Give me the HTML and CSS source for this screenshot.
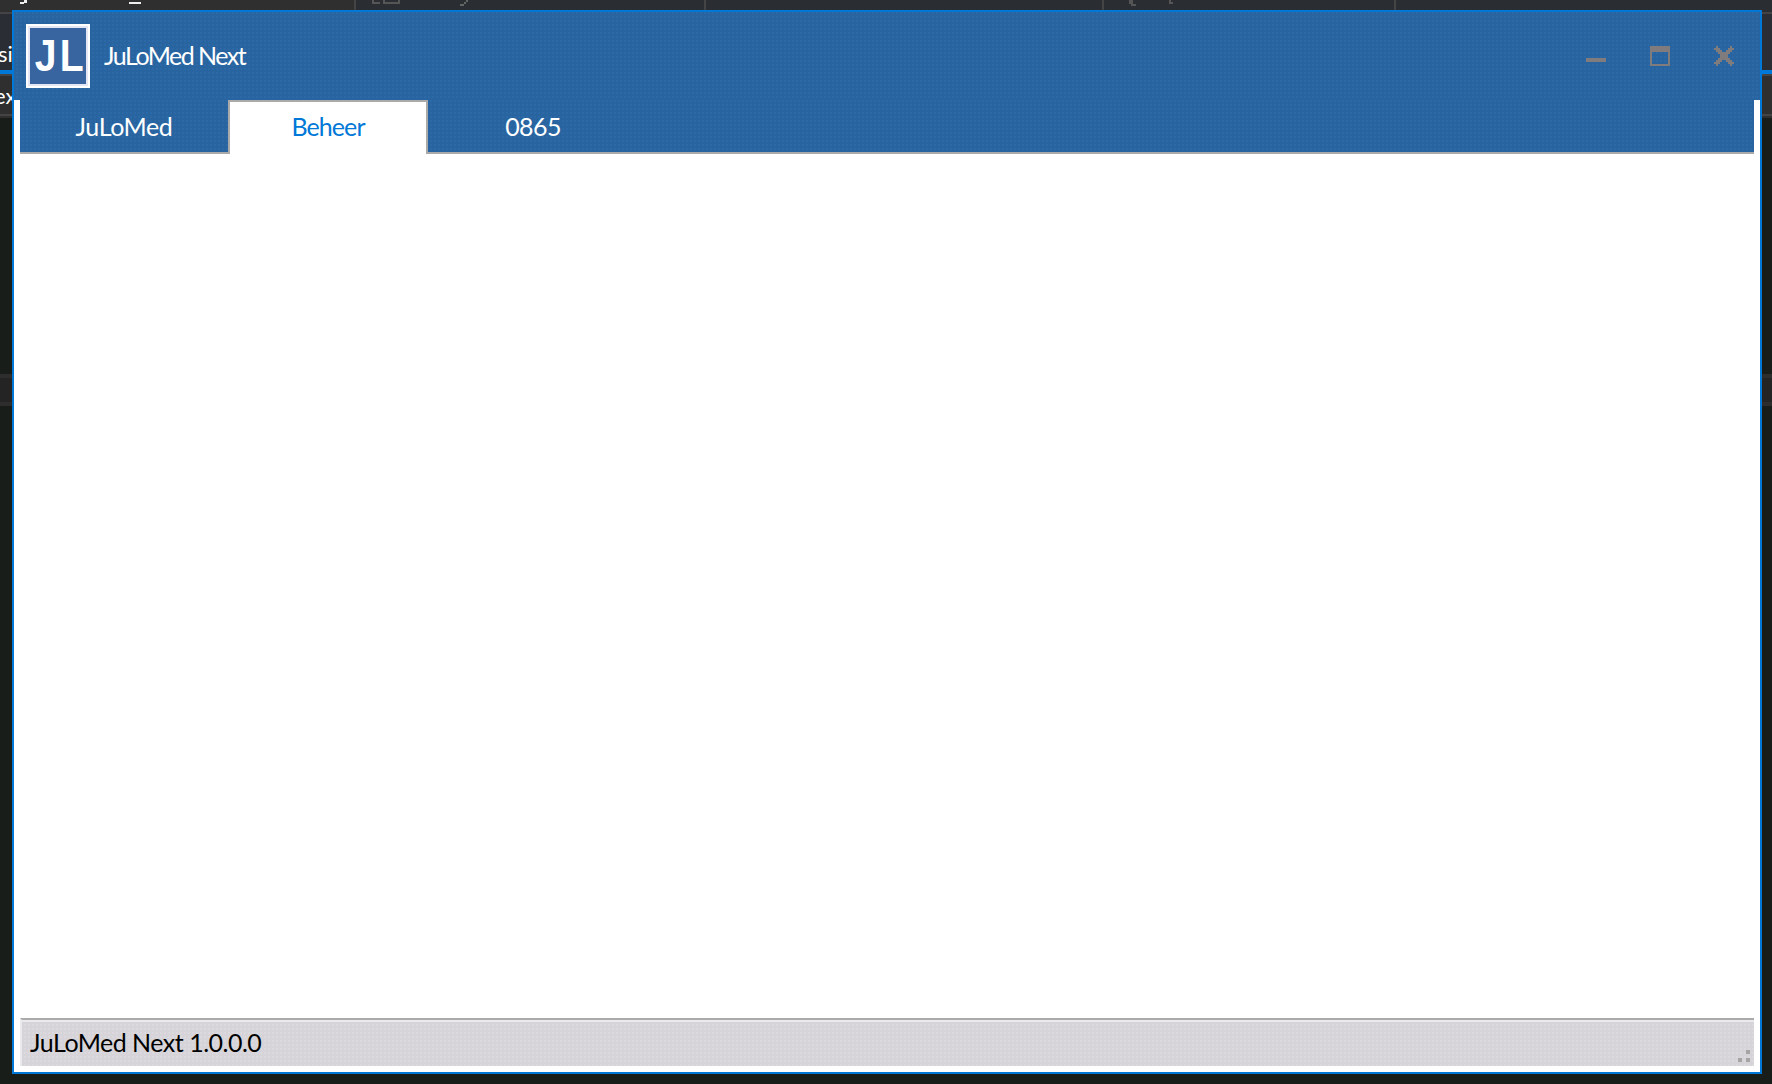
FILE: index.html
```html
<!DOCTYPE html>
<html lang="nl">
<head>
    <meta charset="UTF-8">
    <meta name="viewport" content="width=device-width, initial-scale=1.0">
    <title>JuLoMed Next</title>
    <link rel="stylesheet" href="styles.css">
</head>
<body>
    <div class="desktop">
        <div class="panels">
            <div class="panel first"></div>
            <div class="panel second"></div>
            <div class="panel third"></div>
            <div class="panel fourth"></div>
            <div class="panel last"></div>
        </div>
        <div class="strip">si</div>
        <div class="accent"></div>
        <div class="toolbar">ex</div>
        <div class="divider"></div>
        <!-- clipped remains of the labels behind the window -->
        <svg class="scraps" width="1200" height="10" viewBox="0 0 1200 10">
            <path d="M20 2h4v2h-4zM24 0h3v3h-3zM129 2h12v2h-12z" fill="#eeeeee"/>
            <path d="M373 0v3h7M384 0v3h15V0" fill="none" stroke="#555555" stroke-width="2"/>
            <path d="M460 4h4v2h-4zM464 2h2v2h-2zM466 0h2v2h-2z" fill="#656565"/>
            <path d="M1129 0h4v4h-4zM1131 4h5v2h-5zM1169 0h2v4h-2zM1171 2h2v2h-2z" fill="#555555"/>
        </svg>
    </div>

    <div class="window">
        <header class="titlebar">
            <div class="logo"><span>J</span><span>L</span></div>
            <h1>JuLoMed Next</h1>
            <div class="controls">
                <svg width="20" height="20" viewBox="0 0 20 20" shape-rendering="crispEdges">
                    <path d="M0 12h20v4H0z"/>
                </svg>
                <svg width="20" height="20" viewBox="0 0 20 20" shape-rendering="crispEdges">
                    <path fill-rule="evenodd" d="M0 0h20v20H0zM2 6v12h16V6z"/>
                </svg>
                <svg width="20" height="20" viewBox="0 0 20 20" shape-rendering="crispEdges">
                    <path d="M2 0h2v2h2v2h2v2h4V4h2V2h2V0h2v2h2v2h-2v2h-2v2h-2v4h2v2h2v2h2v2h-2v2h-2v-2h-2v-2h-2v-2H8v2H6v2H4v2H2v-2H0v-2h2v-2h2v-2h2V8H4V6H2V4H0V2h2z"/>
                </svg>
            </div>
        </header>
        <div class="content">
            <nav class="tabs">
                <div class="tab home"><span>JuLoMed</span></div>
                <div class="tab active"><span>Beheer</span></div>
                <div class="tab code"><span>0865</span></div>
            </nav>
            <main class="page"></main>
            <footer class="statusbar">
                <span>JuLoMed Next 1.0.0.0</span>
                <svg class="grip" width="12" height="12" viewBox="0 0 12 12">
                    <path d="M8 0h4v4H8zM0 8h4v4H0zM8 8h4v4H8z"/>
                </svg>
            </footer>
        </div>
    </div>
</body>
</html>
```

FILE: styles.css
```css
* {
    box-sizing: border-box;
}
body {
    margin: 0;
    height: 1084px;
    position: relative;
    overflow: hidden;
    background: #181d19;
    font-family: Lato, 'Open Sans', sans-serif;
    font-size: 25px;
}

/* Application behind the window */
.desktop {
    height: 1084px;
    color: #ffffff;
    font-size: 22px;
    background: linear-gradient(#2d2d2d 4px, #242424 4px, #242424 28px, #2d2d2d 28px) 0 374px / 100% 32px no-repeat;
}
.panels {
    display: flex;
    height: 12px;
    background: #2a2d31;
}
.panel {
    border-right: 2px solid #444444;
}
.first {
    width: 356px;
    background: #2f2f2f;
}
.second {
    width: 350px;
}
.third {
    width: 398px;
}
.fourth {
    width: 292px;
}
.last {
    flex: 1;
    border: 0;
}
.strip {
    height: 58px;
    padding-top: 26px;
    border-top: 2px solid #444444;
    background: #2a2d33;
    line-height: 28px;
    text-indent: -2px;
}
.accent {
    height: 4px;
    background: #0078d7;
}
.toolbar {
    height: 42px;
    padding-top: 6px;
    border-top: 2px solid #444444;
    border-bottom: 2px solid #444444;
    background: #2f2f2f;
    line-height: 28px;
    text-indent: -6px;
}
.divider {
    height: 2px;
    background: #2f2f2f;
}
.scraps {
    position: absolute;
    top: 0;
    left: 0;
}

/* Window */
.window {
    position: absolute;
    top: 10px;
    left: 12px;
    width: 1750px;
    height: 1064px;
    display: flex;
    flex-direction: column;
    border: 2px solid #0078d7;
    background: #ffffff;
}
.titlebar {
    display: flex;
    height: 88px;
    padding: 12px 26px 0 12px;
    background: conic-gradient(#2d69a6 25%, #2865a0 0) 0 0 / 4px 4px;
    color: #ffffff;
}
.logo {
    display: flex;
    justify-content: space-between;
    width: 64px;
    height: 64px;
    padding: 0 3px 0 5px;
    border: 2px solid #ffffff;
    box-shadow: inset 0 0 0 2px #e4e6f4;
    background: #38659f;
    font: bold 45px/59px 'Liberation Sans', Arial, sans-serif;
}
.logo span {
    transform: scaleX(0.87);
}
h1 {
    margin: 16px 0 0 14px;
    font-size: 25px;
    font-weight: normal;
    line-height: 30px;
    letter-spacing: -1.5px;
}
.controls {
    display: flex;
    gap: 44px;
    margin: 22px 0 0 auto;
    fill: #807c7e;
}
.content {
    flex: 1;
    display: flex;
    flex-direction: column;
    padding: 0 6px 6px;
}
.tabs {
    display: flex;
    height: 54px;
    background: linear-gradient(#aaaaaa, #aaaaaa) 0 100% / 100% 2px no-repeat, conic-gradient(#2d69a6 25%, #2865a0 0) 0 0 / 4px 4px;
    color: #ffffff;
}
.tab {
    display: flex;
    justify-content: center;
    padding-top: 11px;
    line-height: 30px;
}
.home {
    width: 208px;
    letter-spacing: -0.4px;
}
.active {
    width: 200px;
    border: 2px solid #aaaaaa;
    border-bottom: 0;
    padding-top: 9px;
    background: #ffffff;
    color: #0078d7;
    letter-spacing: -0.9px;
}
.code {
    width: 210px;
    letter-spacing: -0.6px;
}
.page {
    flex: 1;
}
.statusbar {
    display: flex;
    justify-content: space-between;
    height: 48px;
    padding: 7px 4px 0 8px;
    border-top: 2px solid #aaaaaa;
    border-left: 2px solid #ebe9ec;
    background: conic-gradient(#dbd9dd 25%, #d6d4d8 0) 0 0 / 4px 4px;
    box-shadow: inset 0 2px #ebe9ec;
    color: #000000;
    line-height: 30px;
    letter-spacing: -0.5px;
}
.grip {
    margin-top: 23px;
    fill: #a5a5a5;
}
```
